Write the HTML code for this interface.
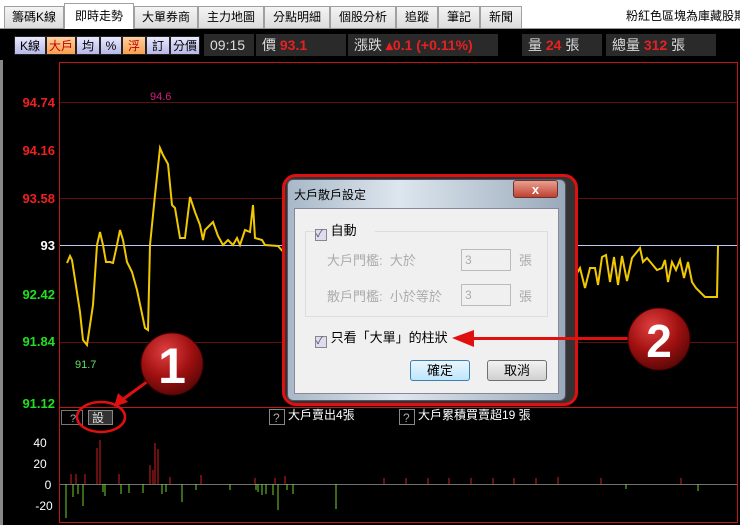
<!DOCTYPE html>
<html><head><meta charset="utf-8"><style>
*{margin:0;padding:0;box-sizing:border-box}
body{width:740px;height:525px;overflow:hidden;background:#000;font-family:"Liberation Sans","Noto Sans CJK TC",sans-serif;position:relative}
.tabs{position:absolute;left:0;top:0;width:740px;height:29px;background:#fff;border-bottom:1px solid #999}
.tab{position:absolute;top:6px;height:22px;background:linear-gradient(#f4f4f4,#dcdcdc);border:1px solid #a0a0a0;border-bottom:none;font-size:12px;color:#000;text-align:center;line-height:21px}
.tab.on{top:3px;height:26px;background:#fff;line-height:24px}
.bar{position:absolute;left:0;top:29px;width:740px;height:31px;background:#000}
.btn{position:absolute;top:7px;height:19px;font-size:12px;text-align:center;line-height:18px;border:1px solid #222;color:#000}
.bl{background:linear-gradient(#e8e8ff,#b8b8e8)}
.bo{background:linear-gradient(#ffd0a0,#f8a050);color:#c00000}
.cell{position:absolute;top:5px;height:22px;background:#2a2a2a;color:#ddd;font-size:14px;line-height:22px;padding-left:6px}
.r{color:#e82020;font-weight:bold}
.y{position:absolute;font-size:13px;font-weight:bold;text-align:right;width:55px;left:0}
</style></head><body>
<div class="tabs">
<div class="tab" style="left:4px;width:60px">籌碼K線</div>
<div class="tab on" style="left:64px;width:70px">即時走勢</div>
<div class="tab" style="left:134px;width:64px">大單券商</div>
<div class="tab" style="left:198px;width:66px">主力地圖</div>
<div class="tab" style="left:264px;width:66px">分點明細</div>
<div class="tab" style="left:330px;width:66px">個股分析</div>
<div class="tab" style="left:396px;width:42px">追蹤</div>
<div class="tab" style="left:438px;width:42px">筆記</div>
<div class="tab" style="left:480px;width:42px">新聞</div>
<div style="position:absolute;left:626px;top:7px;font-size:12px;white-space:nowrap">粉紅色區塊為庫藏股期</div>
</div>
<div class="bar">
<div class="btn bl" style="left:14px;width:32px">K線</div>
<div class="btn bo" style="left:46px;width:30px">大戶</div>
<div class="btn bl" style="left:76px;width:24px">均</div>
<div class="btn bl" style="left:100px;width:22px">%</div>
<div class="btn bo" style="left:122px;width:24px">浮</div>
<div class="btn bl" style="left:146px;width:24px">訂</div>
<div class="btn bl" style="left:170px;width:30px">分價</div>
<div class="cell" style="left:204px;width:50px">09:15</div>
<div class="cell" style="left:256px;width:90px">價 <span class="r">93.1</span></div>
<div class="cell" style="left:348px;width:150px">漲跌 <span class="r">▴0.1 (+0.11%)</span></div>
<div class="cell" style="left:522px;width:80px">量 <span class="r">24</span> 張</div>
<div class="cell" style="left:606px;width:110px">總量 <span class="r">312</span> 張</div>
</div>
<div style="position:absolute;left:0;top:60px;width:3px;height:465px;background:#888"></div>
<div class="y" style="top:95px;color:#f02020">94.74</div>
<div class="y" style="top:143px;color:#f02020">94.16</div>
<div class="y" style="top:191px;color:#f02020">93.58</div>
<div class="y" style="top:238px;color:#fff">93</div>
<div class="y" style="top:287px;color:#20e020">92.42</div>
<div class="y" style="top:334px;color:#20e020">91.84</div>
<div class="y" style="top:396px;color:#20e020">91.12</div>
<svg style="position:absolute;left:0;top:0" width="740" height="525">
<rect x="59.5" y="62.5" width="678" height="460" fill="none" stroke="#c01818"/>
<line x1="59" y1="407.5" x2="738" y2="407.5" stroke="#c01818"/>
<g stroke="#601010"><line x1="60" y1="102.5" x2="737" y2="102.5"/><line x1="60" y1="198.5" x2="737" y2="198.5"/><line x1="60" y1="342.5" x2="737" y2="342.5"/></g>
<line x1="60" y1="245.5" x2="737" y2="245.5" stroke="#b8c8f0"/>
<text x="150" y="100" fill="#d02080" font-size="11" font-family="Liberation Sans">94.6</text>
<text x="75" y="368" fill="#60e060" font-size="11" font-family="Liberation Sans">91.7</text>
<polyline fill="none" stroke="#f0c800" stroke-width="2" points="67,263 70,256 72,260 80,312 83,340 87,345 93,305 97,245 100,232 103,245 106,262 110,262 113,263 117,245 120,230 123,240 127,262 132,272 137,290 145,328 148,330 150,245 155,195 160,148 163,155 168,164 172,205 175,208 180,238 185,238 190,197 195,212 200,225 203,240 205,230 210,225 213,222 218,236 223,245 228,240 233,245 237,238 240,245 245,230 250,232 253,205 255,238 262,240 265,245 278,246 285,254"/>
<polyline fill="none" stroke="#f0c800" stroke-width="2" points="568,258 572,253 576,275 580,268 585,288 590,268 595,268 598,285 602,257 606,255 610,282 614,257 618,285 622,256 627,281 632,258 636,253 640,248 643,262 647,258 652,264 657,270 662,268 665,260 668,282 672,262 676,270 680,260 684,278 688,262 692,282 696,288 700,292 705,297 717,297 718,246"/>
<line x1="60" y1="484.5" x2="737" y2="484.5" stroke="#707070"/>
<g stroke="#d02020"><line x1="71" y1="484" x2="71" y2="474"/><line x1="76" y1="484" x2="76" y2="474"/><line x1="85" y1="484" x2="85" y2="474"/><line x1="97" y1="484" x2="97" y2="448"/><line x1="100" y1="484" x2="100" y2="440"/><line x1="119" y1="484" x2="119" y2="474"/><line x1="150" y1="484" x2="150" y2="465"/><line x1="153" y1="484" x2="153" y2="470"/><line x1="155" y1="484" x2="155" y2="443"/><line x1="158" y1="484" x2="158" y2="449"/><line x1="170" y1="484" x2="170" y2="477"/><line x1="201" y1="484" x2="201" y2="475"/><line x1="255" y1="484" x2="255" y2="478"/><line x1="275" y1="484" x2="275" y2="478"/><line x1="285" y1="484" x2="285" y2="476"/><line x1="384" y1="484" x2="384" y2="478"/><line x1="406" y1="484" x2="406" y2="478"/><line x1="428" y1="484" x2="428" y2="478"/><line x1="449" y1="484" x2="449" y2="478"/><line x1="471" y1="484" x2="471" y2="478"/><line x1="493" y1="484" x2="493" y2="478"/><line x1="514" y1="484" x2="514" y2="478"/><line x1="536" y1="484" x2="536" y2="478"/><line x1="558" y1="484" x2="558" y2="477"/><line x1="601" y1="484" x2="601" y2="478"/><line x1="681" y1="484" x2="681" y2="478"/></g>
<g stroke="#70d030"><line x1="66" y1="484" x2="66" y2="518"/><line x1="73" y1="484" x2="73" y2="497"/><line x1="78" y1="484" x2="78" y2="494"/><line x1="83" y1="484" x2="83" y2="506"/><line x1="103" y1="484" x2="103" y2="492"/><line x1="105" y1="484" x2="105" y2="496"/><line x1="121" y1="484" x2="121" y2="494"/><line x1="129" y1="484" x2="129" y2="493"/><line x1="143" y1="484" x2="143" y2="493"/><line x1="162" y1="484" x2="162" y2="494"/><line x1="166" y1="484" x2="166" y2="492"/><line x1="182" y1="484" x2="182" y2="502"/><line x1="196" y1="484" x2="196" y2="490"/><line x1="230" y1="484" x2="230" y2="490"/><line x1="256" y1="484" x2="256" y2="490"/><line x1="258" y1="484" x2="258" y2="492"/><line x1="262" y1="484" x2="262" y2="495"/><line x1="266" y1="484" x2="266" y2="494"/><line x1="273" y1="484" x2="273" y2="495"/><line x1="278" y1="484" x2="278" y2="510"/><line x1="287" y1="484" x2="287" y2="490"/><line x1="293" y1="484" x2="293" y2="494"/><line x1="336" y1="484" x2="336" y2="509"/><line x1="626" y1="484" x2="626" y2="489"/><line x1="698" y1="484" x2="698" y2="491"/></g>
<text x="40" y="447" fill="#fff" font-size="12" font-family="Liberation Sans" text-anchor="middle">40</text>
<text x="40" y="468" fill="#fff" font-size="12" font-family="Liberation Sans" text-anchor="middle">20</text>
<text x="48" y="489" fill="#fff" font-size="12" font-family="Liberation Sans" text-anchor="middle">0</text>
<text x="44" y="510" fill="#fff" font-size="12" font-family="Liberation Sans" text-anchor="middle">-20</text>
<rect x="61.5" y="410.5" width="21" height="14" fill="none" stroke="#777"/>
<text x="70" y="422" fill="#aaa" font-size="11">?</text>
<rect x="88.5" y="410.5" width="24" height="14" fill="#333" stroke="#888"/>
<text x="92" y="422" fill="#ddd" font-size="12" font-family="Liberation Sans,Noto Sans CJK TC">設</text>
<ellipse cx="101" cy="417" rx="24" ry="15" fill="none" stroke="#e01010" stroke-width="2.5"/>
<rect x="269.5" y="409.5" width="15" height="15" fill="none" stroke="#888"/>
<text x="273" y="422" fill="#aaa" font-size="12">?</text>
<text x="288" y="419" fill="#fff" font-size="12" font-family="Liberation Sans,Noto Sans CJK TC">大戶賣出4張</text>
<rect x="399.5" y="409.5" width="15" height="15" fill="none" stroke="#888"/>
<text x="403" y="422" fill="#aaa" font-size="12">?</text>
<text x="418" y="419" fill="#fff" font-size="12" font-family="Liberation Sans,Noto Sans CJK TC">大戶累積買賣超19 張</text>
<defs><radialGradient id="g" cx="0.4" cy="0.3" r="0.7"><stop offset="0" stop-color="#e04040"/><stop offset="0.6" stop-color="#a01010"/><stop offset="1" stop-color="#600808"/></radialGradient></defs>
<line x1="148" y1="381" x2="122" y2="400" stroke="#e01010" stroke-width="3"/>
<polygon points="114,407 118,393 128,402" fill="#e01010"/>
<circle cx="172" cy="364" r="31" fill="url(#g)" stroke="#400" stroke-width="1"/>
<text x="172" y="383" fill="#fff" font-size="50" font-weight="bold" text-anchor="middle" font-family="Liberation Sans">1</text>
</svg>
<div style="position:absolute;left:282px;top:174px;width:296px;height:232px;border:3px solid #e01010;border-radius:14px;background:#333"></div>
<div style="position:absolute;left:287px;top:179px;width:279px;height:222px;border-radius:6px;background:linear-gradient(90deg,#a8b8c8,#dde6ee 40%,#9aaabb);border:1px solid #556"></div>
<div style="position:absolute;left:294px;top:186px;font-size:12px;color:#000">大戶散戶設定</div>
<div style="position:absolute;left:513px;top:180px;width:45px;height:18px;border-radius:3px;background:linear-gradient(#e8a090,#c04030);border:1px solid #633;color:#fff;font-weight:bold;font-size:13px;text-align:center;line-height:17px">x</div>
<div style="position:absolute;left:294px;top:208px;width:265px;height:186px;background:#f0f0f0;border:1px solid #889"></div>
<div style="position:absolute;left:305px;top:231px;width:243px;height:86px;border:1px solid #ddd"></div>
<div style="position:absolute;left:315px;top:223px;width:60px;height:16px;background:#f0f0f0;font-size:13px;line-height:16px"><span style="display:inline-block;width:12px;height:12px;border:1px solid #888;background:#dde;vertical-align:-2px;font-size:10px;line-height:10px;color:#446">✓</span> 自動</div>
<div style="position:absolute;left:327px;top:250px;font-size:13px;color:#aaa">大戶門檻:&nbsp; 大於</div>
<div style="position:absolute;left:327px;top:286px;font-size:13px;color:#aaa">散戶門檻:&nbsp; 小於等於</div>
<div style="position:absolute;left:461px;top:249px;width:50px;height:22px;border:1px solid #bbb;font-size:12px;color:#aaa;padding:3px">3</div>
<div style="position:absolute;left:461px;top:284px;width:50px;height:22px;border:1px solid #bbb;font-size:12px;color:#aaa;padding:3px">3</div>
<div style="position:absolute;left:519px;top:250px;font-size:13px;color:#aaa">張</div>
<div style="position:absolute;left:519px;top:286px;font-size:13px;color:#aaa">張</div>
<div style="position:absolute;left:315px;top:330px;font-size:13px;line-height:16px"><span style="display:inline-block;width:12px;height:12px;border:1px solid #888;background:#dde;vertical-align:-2px;font-size:10px;line-height:10px;color:#446">✓</span> 只看「大單」的柱狀</div>
<div style="position:absolute;left:410px;top:360px;width:60px;height:21px;border:1px solid #3c7fb1;border-radius:3px;background:linear-gradient(#eaf6fd,#bee6fd);font-size:13px;text-align:center;line-height:19px">確定</div>
<div style="position:absolute;left:487px;top:360px;width:60px;height:21px;border:1px solid #707070;border-radius:3px;background:linear-gradient(#f2f2f2,#d0d0d0);font-size:13px;text-align:center;line-height:19px">取消</div>
<svg style="position:absolute;left:0;top:0" width="740" height="525">
<defs><radialGradient id="g2" cx="0.4" cy="0.3" r="0.7"><stop offset="0" stop-color="#e04040"/><stop offset="0.6" stop-color="#a01010"/><stop offset="1" stop-color="#600808"/></radialGradient></defs>
<line x1="470" y1="338.5" x2="630" y2="338.5" stroke="#e01010" stroke-width="3"/>
<polygon points="452,338 474,330 474,347" fill="#e01010"/>
<circle cx="659" cy="339" r="31" fill="url(#g2)" stroke="#400"/>
<text x="659" y="357" fill="#fff" font-size="46" font-weight="bold" text-anchor="middle" font-family="Liberation Sans">2</text>
</svg>
</body></html>
